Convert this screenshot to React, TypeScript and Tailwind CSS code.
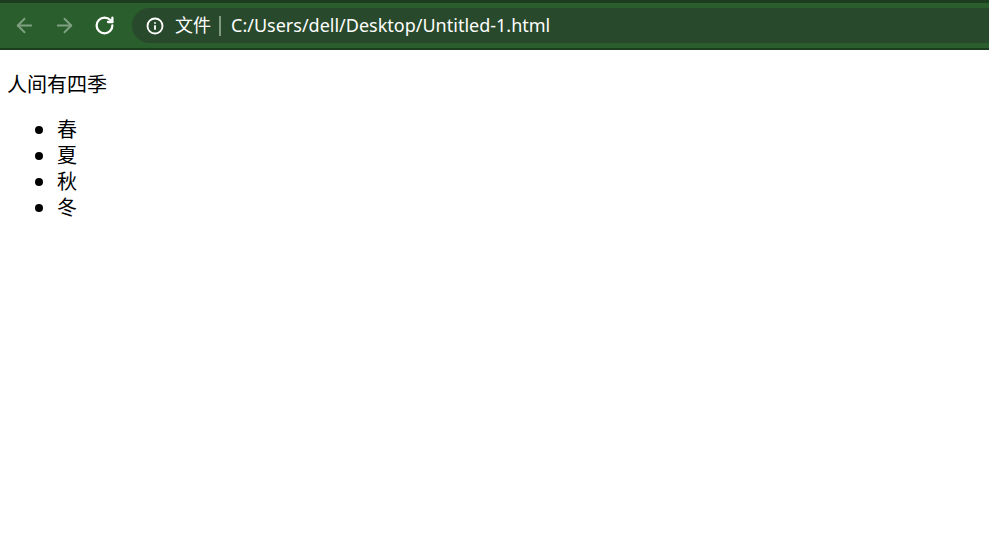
import React from 'react'
import { ArrowLeft, ArrowRight, RotateCw, Info } from 'lucide-react'

const seasons = ['春', '夏', '秋', '冬']

const App: React.FC = () => {
  return (
    <div className="h-[549px] w-[989px] overflow-hidden bg-white font-['Liberation_Sans','Noto_Sans_CJK_SC',sans-serif] text-black">
      {/* 工具栏 */}
      <div className="h-[50px] border-t-[3px] border-b-2 border-t-[#1d3d1f] border-b-[#1d3d1f] bg-[#2a5e2c] pt-[5px]">
        <div className="flex h-[35px] items-center">
          <div className="flex w-[132px] items-center pl-[13px]">
            <ArrowLeft size={23} strokeWidth={2} className="text-[#7fa081]" />
            <ArrowRight size={23} strokeWidth={2} className="ml-[17px] text-[#7fa081]" />
            <RotateCw size={21} strokeWidth={2.6} className="ml-[18px] text-white" />
          </div>
          <div className="flex h-[35px] flex-1 items-center rounded-l-full bg-[#28492b] pl-[14px] font-['Noto_Sans','Noto_Sans_CJK_SC',sans-serif] text-[18px] text-white">
            <Info size={18} strokeWidth={2.5} />
            <span className="ml-[11px]">文件</span>
            <div className="ml-[8px] h-[20px] w-[2px] bg-[#7f9a81]" />
            <span className="ml-[10px]">C:/Users/dell/Desktop/Untitled-1.html</span>
          </div>
        </div>
      </div>
      {/* 页面内容 */}
      <div className="px-[7px] text-[20px] leading-[26px]">
        <p className="mt-[22px]">人间有四季</p>
        <ul className="mt-[19px] pl-[50px]">
          {seasons.map((season) => (
            <li key={season} className="flex items-center">
              <span className="ml-[-22px] mr-[14px] h-[8px] w-[8px] rounded-full bg-black" />
              {season}
            </li>
          ))}
        </ul>
      </div>
    </div>
  )
}

export default App
